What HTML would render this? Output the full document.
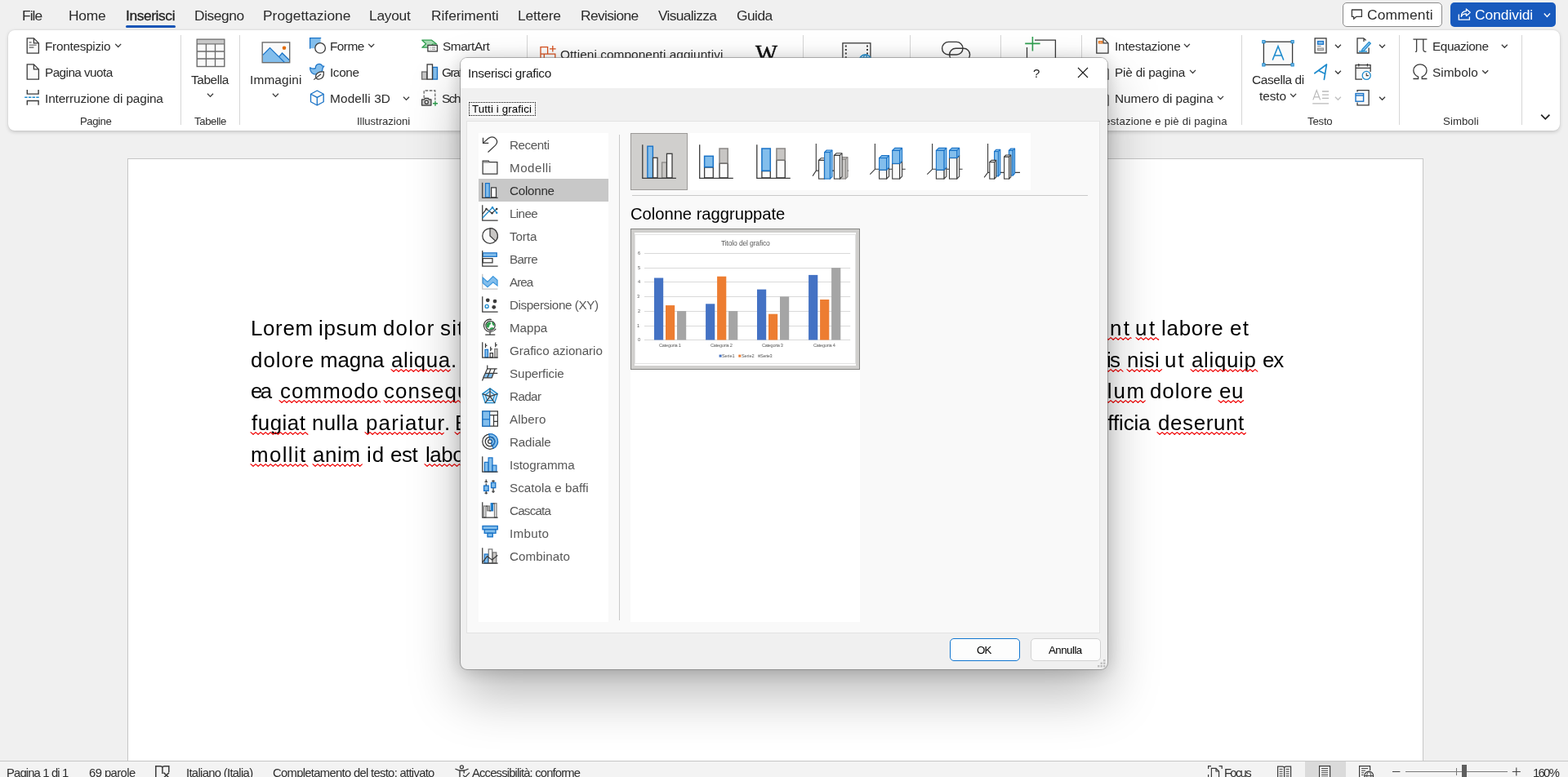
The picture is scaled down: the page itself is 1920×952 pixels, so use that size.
<!DOCTYPE html>
<html lang="it"><head><meta charset="utf-8"><title>Inserisci grafico</title>
<style>
html,body{margin:0;padding:0}
body{width:1920px;height:952px;overflow:hidden;position:relative;background:#f0f0f0;font-family:"Liberation Sans",sans-serif}
div,svg,span.t{position:absolute}
span.t{white-space:pre}
svg{overflow:visible}
</style></head>
<body>
<div style="left:0;top:0;width:1920px;height:952px;will-change:transform">
<div style="left:156px;top:194px;width:1587px;height:760px;background:#fff;border:1px solid #c6c6c6;box-sizing:border-box"></div>
<span class="t" style="left:307px;top:388px;font-size:25.9px;line-height:28px;color:#000;letter-spacing:0.66px;">Lorem </span>
<span class="t" style="left:390px;top:388px;font-size:25.9px;line-height:28px;color:#000;letter-spacing:0.66px;">ipsum </span>
<span class="t" style="left:469px;top:388px;font-size:25.9px;line-height:28px;color:#000;letter-spacing:1.2px;">dolor </span>
<span class="t" style="left:539px;top:388px;font-size:25.9px;line-height:28px;color:#000;letter-spacing:1.2px;">sit </span>
<span class="t" style="left:649px;top:388px;font-size:25.9px;line-height:28px;color:#000;letter-spacing:-0.95px;">amet, consectetur adipiscing elit, sed do eiusmod tempor </span>
<span class="t" style="left:1252px;top:388px;font-size:25.9px;line-height:28px;color:#000;letter-spacing:2.4px;">incididunt </span>
<span class="t" style="left:1390px;top:388px;font-size:25.9px;line-height:28px;color:#000;letter-spacing:2.6px;">ut </span>
<span class="t" style="left:1422px;top:388px;font-size:25.9px;line-height:28px;color:#000;letter-spacing:0.76px;">labore </span>
<span class="t" style="left:1506px;top:388px;font-size:25.9px;line-height:28px;color:#000;letter-spacing:1.4px;">et </span>
<span class="t" style="left:307px;top:427px;font-size:25.9px;line-height:28px;color:#000;letter-spacing:1.02px;">dolore </span>
<span class="t" style="left:392px;top:427px;font-size:25.9px;line-height:28px;color:#000;letter-spacing:-0.16px;">magna </span>
<span class="t" style="left:479px;top:427px;font-size:25.9px;line-height:28px;color:#000;letter-spacing:0.63px;">aliqua. </span>
<span class="t" style="left:648px;top:427px;font-size:25.9px;line-height:28px;color:#000;letter-spacing:-1.42px;">Ut enim ad minim veniam, quis nostrud exercitation ullamco </span>
<span class="t" style="left:1306px;top:427px;font-size:25.9px;line-height:28px;color:#000;letter-spacing:-1.7px;">laboris </span>
<span class="t" style="left:1380px;top:427px;font-size:25.9px;line-height:28px;color:#000;letter-spacing:0.3px;">nisi </span>
<span class="t" style="left:1426px;top:427px;font-size:25.9px;line-height:28px;color:#000;letter-spacing:2px;">ut </span>
<span class="t" style="left:1459px;top:427px;font-size:25.9px;line-height:28px;color:#000;letter-spacing:0.67px;">aliquip </span>
<span class="t" style="left:1546px;top:427px;font-size:25.9px;line-height:28px;color:#000;letter-spacing:-1.2px;">ex </span>
<span class="t" style="left:307px;top:465px;font-size:25.9px;line-height:28px;color:#000;letter-spacing:-2.6px;">ea </span>
<span class="t" style="left:343px;top:465px;font-size:25.9px;line-height:28px;color:#000;letter-spacing:1.09px;">commodo </span>
<span class="t" style="left:470px;top:465px;font-size:25.9px;line-height:28px;color:#000;letter-spacing:1.09px;">consequat. </span>
<span class="t" style="left:648px;top:465px;font-size:25.9px;line-height:28px;color:#000;letter-spacing:-1.2px;">Duis aute irure dolor in reprehenderit in voluptate velit esse </span>
<span class="t" style="left:1326px;top:465px;font-size:25.9px;line-height:28px;color:#000;letter-spacing:1.8px;">cillum </span>
<span class="t" style="left:1408px;top:465px;font-size:25.9px;line-height:28px;color:#000;letter-spacing:0.92px;">dolore </span>
<span class="t" style="left:1493px;top:465px;font-size:25.9px;line-height:28px;color:#000;letter-spacing:0.5px;">eu </span>
<span class="t" style="left:308px;top:504px;font-size:25.9px;line-height:28px;color:#000;letter-spacing:0.52px;">fugiat </span>
<span class="t" style="left:382px;top:504px;font-size:25.9px;line-height:28px;color:#000;letter-spacing:0.4px;">nulla </span>
<span class="t" style="left:448px;top:504px;font-size:25.9px;line-height:28px;color:#000;letter-spacing:1.19px;">pariatur. </span>
<span class="t" style="left:557px;top:504px;font-size:25.9px;line-height:28px;color:#000;letter-spacing:1.19px;">Excepteur </span>
<span class="t" style="left:649px;top:504px;font-size:25.9px;line-height:28px;color:#000;letter-spacing:-0.24px;">sint occaecat cupidatat non proident, sunt in culpa qui </span>
<span class="t" style="left:1342px;top:504px;font-size:25.9px;line-height:28px;color:#000;letter-spacing:-0.1px;">officia </span>
<span class="t" style="left:1418px;top:504px;font-size:25.9px;line-height:28px;color:#000;letter-spacing:0.64px;">deserunt </span>
<span class="t" style="left:307px;top:543px;font-size:25.9px;line-height:28px;color:#000;letter-spacing:1.38px;">mollit </span>
<span class="t" style="left:383px;top:543px;font-size:25.9px;line-height:28px;color:#000;letter-spacing:0.61px;">anim </span>
<span class="t" style="left:449px;top:543px;font-size:25.9px;line-height:28px;color:#000;letter-spacing:0.9px;">id </span>
<span class="t" style="left:478px;top:543px;font-size:25.9px;line-height:28px;color:#000;letter-spacing:-0.45px;">est </span>
<span class="t" style="left:521px;top:543px;font-size:25.9px;line-height:28px;color:#000;letter-spacing:-0.45px;">laborum. </span>
<svg style="left:479.3px;top:452.1px" width="72.4" height="4" viewBox="0 0 72.4 4"><path d="M0 0.6 L3.04 3.30 L6.07 0.60 L9.11 3.30 L12.14 0.60 L15.18 3.30 L18.21 0.60 L21.25 3.30 L24.28 0.60 L27.32 3.30 L30.35 0.60 L33.39 3.30 L36.42 0.60 L39.45 3.30 L42.49 0.60 L45.52 3.30 L48.56 0.60 L51.59 3.30 L54.63 0.60 L57.66 3.30 L60.70 0.60 L63.73 3.30 L66.77 0.60 L69.80 3.30 L72.40 0.99" fill="none" stroke="#f00000" stroke-width="1.15" stroke-linejoin="round" stroke-linecap="round"/></svg>
<svg style="left:342.2px;top:490.1px" width="123.7" height="4" viewBox="0 0 123.7 4"><path d="M0 0.6 L3.04 3.30 L6.07 0.60 L9.11 3.30 L12.14 0.60 L15.18 3.30 L18.21 0.60 L21.25 3.30 L24.28 0.60 L27.32 3.30 L30.35 0.60 L33.39 3.30 L36.42 0.60 L39.45 3.30 L42.49 0.60 L45.52 3.30 L48.56 0.60 L51.59 3.30 L54.63 0.60 L57.66 3.30 L60.70 0.60 L63.73 3.30 L66.77 0.60 L69.80 3.30 L72.84 0.60 L75.87 3.30 L78.91 0.60 L81.94 3.30 L84.98 0.60 L88.01 3.30 L91.05 0.60 L94.08 3.30 L97.12 0.60 L100.15 3.30 L103.19 0.60 L106.22 3.30 L109.26 0.60 L112.29 3.30 L115.33 0.60 L118.36 3.30 L121.40 0.60 L123.70 2.65" fill="none" stroke="#f00000" stroke-width="1.15" stroke-linejoin="round" stroke-linecap="round"/></svg>
<svg style="left:470.2px;top:490.1px" width="95.8" height="4" viewBox="0 0 95.8 4"><path d="M0 0.6 L3.04 3.30 L6.07 0.60 L9.11 3.30 L12.14 0.60 L15.18 3.30 L18.21 0.60 L21.25 3.30 L24.28 0.60 L27.32 3.30 L30.35 0.60 L33.39 3.30 L36.42 0.60 L39.45 3.30 L42.49 0.60 L45.52 3.30 L48.56 0.60 L51.59 3.30 L54.63 0.60 L57.66 3.30 L60.70 0.60 L63.73 3.30 L66.77 0.60 L69.80 3.30 L72.84 0.60 L75.87 3.30 L78.91 0.60 L81.94 3.30 L84.98 0.60 L88.01 3.30 L91.05 0.60 L94.08 3.30 L95.80 1.77" fill="none" stroke="#f00000" stroke-width="1.15" stroke-linejoin="round" stroke-linecap="round"/></svg>
<svg style="left:307px;top:529.1px" width="70.0" height="4" viewBox="0 0 70.0 4"><path d="M0 0.6 L3.04 3.30 L6.07 0.60 L9.11 3.30 L12.14 0.60 L15.18 3.30 L18.21 0.60 L21.25 3.30 L24.28 0.60 L27.32 3.30 L30.35 0.60 L33.39 3.30 L36.42 0.60 L39.45 3.30 L42.49 0.60 L45.52 3.30 L48.56 0.60 L51.59 3.30 L54.63 0.60 L57.66 3.30 L60.70 0.60 L63.73 3.30 L66.77 0.60 L69.80 3.30 L70.00 3.13" fill="none" stroke="#f00000" stroke-width="1.15" stroke-linejoin="round" stroke-linecap="round"/></svg>
<svg style="left:447px;top:529.1px" width="96.3" height="4" viewBox="0 0 96.3 4"><path d="M0 0.6 L3.04 3.30 L6.07 0.60 L9.11 3.30 L12.14 0.60 L15.18 3.30 L18.21 0.60 L21.25 3.30 L24.28 0.60 L27.32 3.30 L30.35 0.60 L33.39 3.30 L36.42 0.60 L39.45 3.30 L42.49 0.60 L45.52 3.30 L48.56 0.60 L51.59 3.30 L54.63 0.60 L57.66 3.30 L60.70 0.60 L63.73 3.30 L66.77 0.60 L69.80 3.30 L72.84 0.60 L75.87 3.30 L78.91 0.60 L81.94 3.30 L84.98 0.60 L88.01 3.30 L91.05 0.60 L94.08 3.30 L96.30 1.33" fill="none" stroke="#f00000" stroke-width="1.15" stroke-linejoin="round" stroke-linecap="round"/></svg>
<svg style="left:557px;top:529.1px" width="9.0" height="4" viewBox="0 0 9.0 4"><path d="M0 0.6 L3.04 3.30 L6.07 0.60 L9.00 3.21" fill="none" stroke="#f00000" stroke-width="1.15" stroke-linejoin="round" stroke-linecap="round"/></svg>
<svg style="left:307px;top:568.1px" width="70.0" height="4" viewBox="0 0 70.0 4"><path d="M0 0.6 L3.04 3.30 L6.07 0.60 L9.11 3.30 L12.14 0.60 L15.18 3.30 L18.21 0.60 L21.25 3.30 L24.28 0.60 L27.32 3.30 L30.35 0.60 L33.39 3.30 L36.42 0.60 L39.45 3.30 L42.49 0.60 L45.52 3.30 L48.56 0.60 L51.59 3.30 L54.63 0.60 L57.66 3.30 L60.70 0.60 L63.73 3.30 L66.77 0.60 L69.80 3.30 L70.00 3.13" fill="none" stroke="#f00000" stroke-width="1.15" stroke-linejoin="round" stroke-linecap="round"/></svg>
<svg style="left:383px;top:568.1px" width="60.4" height="4" viewBox="0 0 60.4 4"><path d="M0 0.6 L3.04 3.30 L6.07 0.60 L9.11 3.30 L12.14 0.60 L15.18 3.30 L18.21 0.60 L21.25 3.30 L24.28 0.60 L27.32 3.30 L30.35 0.60 L33.39 3.30 L36.42 0.60 L39.45 3.30 L42.49 0.60 L45.52 3.30 L48.56 0.60 L51.59 3.30 L54.63 0.60 L57.66 3.30 L60.40 0.87" fill="none" stroke="#f00000" stroke-width="1.15" stroke-linejoin="round" stroke-linecap="round"/></svg>
<svg style="left:520px;top:568.1px" width="46.0" height="4" viewBox="0 0 46.0 4"><path d="M0 0.6 L3.04 3.30 L6.07 0.60 L9.11 3.30 L12.14 0.60 L15.18 3.30 L18.21 0.60 L21.25 3.30 L24.28 0.60 L27.32 3.30 L30.35 0.60 L33.39 3.30 L36.42 0.60 L39.45 3.30 L42.49 0.60 L45.52 3.30 L46.00 2.88" fill="none" stroke="#f00000" stroke-width="1.15" stroke-linejoin="round" stroke-linecap="round"/></svg>
<svg style="left:1354px;top:413.1px" width="31.2" height="4" viewBox="0 0 31.2 4"><path d="M0 0.6 L3.04 3.30 L6.07 0.60 L9.11 3.30 L12.14 0.60 L15.18 3.30 L18.21 0.60 L21.25 3.30 L24.28 0.60 L27.32 3.30 L30.35 0.60 L31.20 1.36" fill="none" stroke="#f00000" stroke-width="1.15" stroke-linejoin="round" stroke-linecap="round"/></svg>
<svg style="left:1391.1px;top:413.1px" width="27.8" height="4" viewBox="0 0 27.8 4"><path d="M0 0.6 L3.04 3.30 L6.07 0.60 L9.11 3.30 L12.14 0.60 L15.18 3.30 L18.21 0.60 L21.25 3.30 L24.28 0.60 L27.32 3.30 L27.80 2.87" fill="none" stroke="#f00000" stroke-width="1.15" stroke-linejoin="round" stroke-linecap="round"/></svg>
<svg style="left:1354px;top:452.1px" width="21.0" height="4" viewBox="0 0 21.0 4"><path d="M0 0.6 L3.04 3.30 L6.07 0.60 L9.11 3.30 L12.14 0.60 L15.18 3.30 L18.21 0.60 L21.00 3.08" fill="none" stroke="#f00000" stroke-width="1.15" stroke-linejoin="round" stroke-linecap="round"/></svg>
<svg style="left:1379.8px;top:452.1px" width="42.6" height="4" viewBox="0 0 42.6 4"><path d="M0 0.6 L3.04 3.30 L6.07 0.60 L9.11 3.30 L12.14 0.60 L15.18 3.30 L18.21 0.60 L21.25 3.30 L24.28 0.60 L27.32 3.30 L30.35 0.60 L33.39 3.30 L36.42 0.60 L39.45 3.30 L42.49 0.60 L42.60 0.70" fill="none" stroke="#f00000" stroke-width="1.15" stroke-linejoin="round" stroke-linecap="round"/></svg>
<svg style="left:1458px;top:452.1px" width="81.8" height="4" viewBox="0 0 81.8 4"><path d="M0 0.6 L3.04 3.30 L6.07 0.60 L9.11 3.30 L12.14 0.60 L15.18 3.30 L18.21 0.60 L21.25 3.30 L24.28 0.60 L27.32 3.30 L30.35 0.60 L33.39 3.30 L36.42 0.60 L39.45 3.30 L42.49 0.60 L45.52 3.30 L48.56 0.60 L51.59 3.30 L54.63 0.60 L57.66 3.30 L60.70 0.60 L63.73 3.30 L66.77 0.60 L69.80 3.30 L72.84 0.60 L75.87 3.30 L78.91 0.60 L81.80 3.17" fill="none" stroke="#f00000" stroke-width="1.15" stroke-linejoin="round" stroke-linecap="round"/></svg>
<svg style="left:1354px;top:490.1px" width="48.3" height="4" viewBox="0 0 48.3 4"><path d="M0 0.6 L3.04 3.30 L6.07 0.60 L9.11 3.30 L12.14 0.60 L15.18 3.30 L18.21 0.60 L21.25 3.30 L24.28 0.60 L27.32 3.30 L30.35 0.60 L33.39 3.30 L36.42 0.60 L39.45 3.30 L42.49 0.60 L45.52 3.30 L48.30 0.83" fill="none" stroke="#f00000" stroke-width="1.15" stroke-linejoin="round" stroke-linecap="round"/></svg>
<svg style="left:1492px;top:490.1px" width="30.7" height="4" viewBox="0 0 30.7 4"><path d="M0 0.6 L3.04 3.30 L6.07 0.60 L9.11 3.30 L12.14 0.60 L15.18 3.30 L18.21 0.60 L21.25 3.30 L24.28 0.60 L27.32 3.30 L30.35 0.60 L30.70 0.91" fill="none" stroke="#f00000" stroke-width="1.15" stroke-linejoin="round" stroke-linecap="round"/></svg>
<svg style="left:1417.2px;top:529.1px" width="108.3" height="4" viewBox="0 0 108.3 4"><path d="M0 0.6 L3.04 3.30 L6.07 0.60 L9.11 3.30 L12.14 0.60 L15.18 3.30 L18.21 0.60 L21.25 3.30 L24.28 0.60 L27.32 3.30 L30.35 0.60 L33.39 3.30 L36.42 0.60 L39.45 3.30 L42.49 0.60 L45.52 3.30 L48.56 0.60 L51.59 3.30 L54.63 0.60 L57.66 3.30 L60.70 0.60 L63.73 3.30 L66.77 0.60 L69.80 3.30 L72.84 0.60 L75.87 3.30 L78.91 0.60 L81.94 3.30 L84.98 0.60 L88.01 3.30 L91.05 0.60 L94.08 3.30 L97.12 0.60 L100.15 3.30 L103.19 0.60 L106.22 3.30 L108.30 1.45" fill="none" stroke="#f00000" stroke-width="1.15" stroke-linejoin="round" stroke-linecap="round"/></svg>
<div style="left:10px;top:37px;width:1900px;height:123px;background:#fff;border-radius:8px;box-shadow:0 1.5px 4px rgba(0,0,0,.17),0 0 1.5px rgba(0,0,0,.12)"></div>
<span class="t" style="left:27px;top:9px;font-size:17.4px;line-height:20px;color:#2b2b2b;letter-spacing:-0.94px;">File</span>
<span class="t" style="left:84px;top:9px;font-size:17.4px;line-height:20px;color:#2b2b2b;letter-spacing:-0.2px;">Home</span>
<span class="t" style="left:238px;top:9px;font-size:17.4px;line-height:20px;color:#2b2b2b;letter-spacing:-0.42px;">Disegno</span>
<span class="t" style="left:322px;top:9px;font-size:17.4px;line-height:20px;color:#2b2b2b;letter-spacing:0.01px;">Progettazione</span>
<span class="t" style="left:452px;top:9px;font-size:17.4px;line-height:20px;color:#2b2b2b;letter-spacing:-0.28px;">Layout</span>
<span class="t" style="left:528px;top:9px;font-size:17.4px;line-height:20px;color:#2b2b2b;letter-spacing:-0.04px;">Riferimenti</span>
<span class="t" style="left:634px;top:9px;font-size:17.4px;line-height:20px;color:#2b2b2b;letter-spacing:-0.21px;">Lettere</span>
<span class="t" style="left:711px;top:9px;font-size:17.4px;line-height:20px;color:#2b2b2b;letter-spacing:-0.66px;">Revisione</span>
<span class="t" style="left:806px;top:9px;font-size:17.4px;line-height:20px;color:#2b2b2b;letter-spacing:-0.68px;">Visualizza</span>
<span class="t" style="left:902px;top:9px;font-size:17.4px;line-height:20px;color:#2b2b2b;letter-spacing:-0.55px;">Guida</span>
<span class="t" style="left:154px;top:9px;font-size:17.4px;line-height:20px;color:#1f1f1f;letter-spacing:-0.41px;-webkit-text-stroke:0.3px #1f1f1f;">Inserisci</span>
<div style="left:154px;top:31px;width:61px;height:3px;background:#1654b6;border-radius:1.5px"></div>
<div style="left:1644px;top:3px;width:122px;height:30px;background:#fff;border:1px solid #8a8a8a;border-radius:5px;box-sizing:border-box"></div>
<span class="t" style="left:1674px;top:8px;font-size:17.4px;line-height:20px;color:#2b2b2b;letter-spacing:0.18px;">Commenti</span>
<div style="left:1776px;top:3px;width:129px;height:30px;background:#185abd;border-radius:5px"></div>
<span class="t" style="left:1806px;top:8px;font-size:17.4px;line-height:20px;color:#fff;letter-spacing:-0.04px;">Condividi</span>
<div style="left:221.0px;top:43px;width:1px;height:110px;background:#d6d6d6"></div>
<div style="left:293.0px;top:43px;width:1px;height:110px;background:#d6d6d6"></div>
<div style="left:645.0px;top:43px;width:1px;height:110px;background:#d6d6d6"></div>
<div style="left:983.0px;top:43px;width:1px;height:110px;background:#d6d6d6"></div>
<div style="left:1114.0px;top:43px;width:1px;height:110px;background:#d6d6d6"></div>
<div style="left:1225.0px;top:43px;width:1px;height:110px;background:#d6d6d6"></div>
<div style="left:1323.5px;top:43px;width:1px;height:110px;background:#d6d6d6"></div>
<div style="left:1520.0px;top:43px;width:1px;height:110px;background:#d6d6d6"></div>
<div style="left:1713.0px;top:43px;width:1px;height:110px;background:#d6d6d6"></div>
<div style="left:1863.0px;top:43px;width:1px;height:110px;background:#d6d6d6"></div>
<span class="t" style="left:55px;top:48px;font-size:15.4px;line-height:17px;color:#2b2b2b;letter-spacing:-0.3px;">Frontespizio</span>
<span class="t" style="left:55px;top:80px;font-size:15.4px;line-height:17px;color:#2b2b2b;letter-spacing:-0.6px;">Pagina vuota</span>
<span class="t" style="left:55px;top:112px;font-size:15.4px;line-height:17px;color:#2b2b2b;letter-spacing:-0.15px;">Interruzione di pagina</span>
<span class="t" style="left:404px;top:48px;font-size:15.4px;line-height:17px;color:#2b2b2b;letter-spacing:-0.55px;">Forme</span>
<span class="t" style="left:404px;top:80px;font-size:15.4px;line-height:17px;color:#2b2b2b;letter-spacing:-0.41px;">Icone</span>
<span class="t" style="left:404px;top:112px;font-size:15.4px;line-height:17px;color:#2b2b2b;letter-spacing:0.14px;">Modelli 3D</span>
<span class="t" style="left:542px;top:48px;font-size:15.4px;line-height:17px;color:#2b2b2b;letter-spacing:-0.43px;">SmartArt</span>
<span class="t" style="left:686px;top:58px;font-size:15.4px;line-height:17px;color:#2b2b2b;letter-spacing:0.06px;">Ottieni componenti aggiuntivi</span>
<span class="t" style="left:1365px;top:48px;font-size:15.4px;line-height:17px;color:#2b2b2b;letter-spacing:-0.21px;">Intestazione</span>
<span class="t" style="left:1365px;top:80px;font-size:15.4px;line-height:17px;color:#2b2b2b;letter-spacing:-0.22px;">Piè di pagina</span>
<span class="t" style="left:1365px;top:112px;font-size:15.4px;line-height:17px;color:#2b2b2b;letter-spacing:-0.07px;">Numero di pagina</span>
<span class="t" style="left:1754px;top:48px;font-size:15.4px;line-height:17px;color:#2b2b2b;letter-spacing:-0.47px;">Equazione</span>
<span class="t" style="left:1754px;top:80px;font-size:15.4px;line-height:17px;color:#2b2b2b;letter-spacing:0.02px;">Simbolo</span>
<span class="t" style="left:541px;top:80px;font-size:15.4px;line-height:17px;color:#2b2b2b;letter-spacing:-1.5px;">Grafico</span>
<span class="t" style="left:541px;top:112px;font-size:15.4px;line-height:17px;color:#2b2b2b;letter-spacing:-1.5px;">Schermata</span>
<span class="t" style="left:234px;top:89px;font-size:15.4px;line-height:17px;color:#2b2b2b;letter-spacing:-0.42px;">Tabella</span>
<span class="t" style="left:306px;top:89px;font-size:15.4px;line-height:17px;color:#2b2b2b;letter-spacing:0.14px;">Immagini</span>
<span class="t" style="left:1533px;top:89px;font-size:15.4px;line-height:17px;color:#2b2b2b;letter-spacing:-0.38px;">Casella di</span>
<span class="t" style="left:1542px;top:109px;font-size:15.4px;line-height:17px;color:#2b2b2b;letter-spacing:-0.09px;">testo</span>
<span class="t" style="left:98px;top:141px;font-size:13.2px;line-height:15px;color:#2e2e2e;letter-spacing:-0.46px;">Pagine</span>
<span class="t" style="left:238px;top:141px;font-size:13.2px;line-height:15px;color:#2e2e2e;letter-spacing:-0.39px;">Tabelle</span>
<span class="t" style="left:437px;top:141px;font-size:13.2px;line-height:15px;color:#2e2e2e;letter-spacing:-0.07px;">Illustrazioni</span>
<span class="t" style="left:1337px;top:141px;font-size:13.2px;line-height:15px;color:#2e2e2e;letter-spacing:0.19px;">Intestazione e piè di pagina</span>
<span class="t" style="left:1601px;top:141px;font-size:13.2px;line-height:15px;color:#2e2e2e;letter-spacing:-0.21px;">Testo</span>
<span class="t" style="left:1767px;top:141px;font-size:13.2px;line-height:15px;color:#2e2e2e;letter-spacing:0.08px;">Simboli</span>
<span class="t" style="left:925px;top:50px;font-size:28.6px;line-height:31px;color:#111;font-family:'Liberation Serif', serif;-webkit-text-stroke:0.5px #111;">W</span>
<svg style="left:0;top:0" width="1920" height="170" viewBox="0 0 1920 170"><path d="M33.2 46.9 H41.400000000000006 L47.400000000000006 52.9 V65.1 H33.2 Z" fill="#fafafa" stroke="#3b3b3b" stroke-width="1.3" stroke-linejoin="miter"/><path d="M41.400000000000006 46.9 V52.9 H47.400000000000006" fill="none" stroke="#3b3b3b" stroke-width="1.3"/><path d="M35.6 51.9 H38.6 M35.6 55.2 H44.6 M35.6 58.1 H41.4" stroke="#8a8a8a" stroke-width="1.6" fill="none"/><path d="M141.2 53.9 L144.7 57.5 L148.2 53.9" fill="none" stroke="#3b3b3b" stroke-width="1.3"/><path d="M33.2 78.9 H41.400000000000006 L47.400000000000006 84.9 V97.10000000000001 H33.2 Z" fill="#fafafa" stroke="#3b3b3b" stroke-width="1.3" stroke-linejoin="miter"/><path d="M41.400000000000006 78.9 V84.9 H47.400000000000006" fill="none" stroke="#3b3b3b" stroke-width="1.3"/><path d="M33.3 110 V115.1 H47.1 V110 M33.3 128.7 V123.5 H47.1 V128.7" fill="#fafafa" stroke="#3b3b3b" stroke-width="1.4"/><path d="M30.2 119.3 H48.8" stroke="#1e8bcd" stroke-width="1.4" stroke-dasharray="3.4 1.3" fill="none"/><rect x="241.2" y="48.2" width="33.6" height="33.3" fill="#fafafa" stroke="#6b6b6b" stroke-width="1.4"/><rect x="241.9" y="48.9" width="32.2" height="4.3" fill="#c8c8c8"/><path d="M241.2 53.8 H274.8 M241.2 63 H274.8 M241.2 72 H274.8 M252.4 53.8 V81.5 M263.5 53.8 V81.5" stroke="#6b6b6b" stroke-width="1.3" fill="none"/><path d="M254 114.7 L257.5 118.4 L261 114.7" fill="none" stroke="#3b3b3b" stroke-width="1.3"/><rect x="321.2" y="51.9" width="33.5" height="24.8" fill="#fafafa" stroke="#6b6b6b" stroke-width="1.4"/><path d="M321.9 67.4 L330.5 58.6 L341.6 69.6 L345.5 65 L354 73.4 V76 H321.9 Z" fill="#83beec"/><path d="M321.9 67.4 L330.5 58.6 L348.3 76.4 M341.6 69.6 L345.5 65 L354.1 73.5" fill="none" stroke="#1a73c7" stroke-width="1.3"/><circle cx="348" cy="58.7" r="2.3" fill="#e36c0a"/><path d="M333.9 114.7 L337.4 118.4 L340.9 114.7" fill="none" stroke="#3b3b3b" stroke-width="1.3"/><path d="M379.6 59.2 V46.6 H392.6 V59.2 Z" fill="#83beec"/><path d="M379.6 59.8 V46.6 H393.2" fill="none" stroke="#1a73c7" stroke-width="1.3"/><circle cx="392.1" cy="58.9" r="6.3" fill="#fafafa" stroke="#3b3b3b" stroke-width="1.3"/><path d="M451.2 53.9 L454.7 57.5 L458.2 53.9" fill="none" stroke="#3b3b3b" stroke-width="1.3"/><path d="M379.6 82.8 C381.5 84.2 384 84.4 386.4 83.6 C386 80.3 388.2 78.4 390.8 78.4 C393 78.4 394.2 79.6 394.8 81 L396.8 81.2 L395.2 83.2 C395.2 88 391.6 91.2 387 91.2 C382.2 91.2 379.4 87.6 379.6 82.8 Z" fill="#83beec" stroke="#1a73c7" stroke-width="1.2" stroke-linejoin="round"/><path d="M396.4 87.8 C391.5 87.6 387.2 89.4 386.6 93.2 C386.2 96 388.4 97.4 391 97 C395.2 96.4 396.8 92.4 396.4 87.8 Z" fill="#fafafa" stroke="#3b3b3b" stroke-width="1.2" stroke-linejoin="round"/><path d="M384.2 97.6 L393 90.8" fill="none" stroke="#3b3b3b" stroke-width="1.2"/><path d="M388.3 111 L396.2 115.2 V124.8 L388.3 129 L380.5 124.8 V115.2 Z" fill="#fafafa" stroke="#1a73c7" stroke-width="1.3" stroke-linejoin="round"/><path d="M380.5 115.2 L388.3 119.4 L396.2 115.2 M388.3 119.4 V129" fill="none" stroke="#1a73c7" stroke-width="1.3"/><path d="M494 118.8 L497.5 122.39999999999999 L501 118.8" fill="none" stroke="#3b3b3b" stroke-width="1.3"/><path d="M516.8 49.2 H528.6 L534.6 54 H530 L526 58.2 H516.8 L521.6 53.7 Z" fill="#a6d9b3" stroke="#2f9e4f" stroke-width="1.2" stroke-linejoin="round"/><rect x="523.9" y="55.4" width="11.5" height="7.5" fill="#fafafa" stroke="#3b3b3b" stroke-width="1.3"/><path d="M526.5 58 H527.5 M528.8 58 H533 M526.5 60.3 H527.5 M528.8 60.3 H533" stroke="#8a8a8a" stroke-width="1" fill="none"/><rect x="516.6" y="88" width="6" height="9.1" fill="#c8c8c8" stroke="#6b6b6b" stroke-width="1.3"/><rect x="529.7" y="82.4" width="5.8" height="14.7" fill="#83beec" stroke="#1a73c7" stroke-width="1.3"/><rect x="523.1" y="78.9" width="6.4" height="18.2" fill="#fafafa" stroke="#3b3b3b" stroke-width="1.3"/><path d="M519.2 120 V111 H532.8 V122.6" fill="none" stroke="#6b6b6b" stroke-width="1.3" stroke-dasharray="3.6 1.6"/><path d="M516.6 121.8 H519.4 L520.4 120.4 H524.4 L525.4 121.8 H527.9 V129.1 H516.6 Z" fill="#c8c8c8" stroke="#3b3b3b" stroke-width="1.3" stroke-linejoin="round"/><circle cx="522.3" cy="125.2" r="2" fill="#fafafa" stroke="#3b3b3b" stroke-width="1.2"/><path d="M530 126.8 H536 M533 123.8 V129.8" stroke="#2f9e4f" stroke-width="1.4" fill="none"/><path d="M662 57.6 H670.6 V66.2 H662 Z M662 66.2 V75 M670.6 66.2 H679.8 V75 M666.3 66.2 V75" fill="none" stroke="#d8501e" stroke-width="1.3"/><path d="M673 59.8 H680.6 M676.8 56 V63.6" fill="none" stroke="#d8501e" stroke-width="1.3"/><rect x="1031.9" y="52.8" width="34" height="24" fill="#fafafa" stroke="#3b3b3b" stroke-width="1.3"/><path d="M1035.8 55.4 V75 M1062 55.4 V75" stroke="#3b3b3b" stroke-width="2" stroke-dasharray="2 2.6" fill="none"/><circle cx="1059.5" cy="74.6" r="7.6" fill="#fafafa" stroke="#1e8bcd" stroke-width="1.4"/><path d="M1052 74.6 H1067 M1059.5 67 C1055.5 70.5 1055.5 78.5 1059.5 82 M1059.5 67 C1063.5 70.5 1063.5 78.5 1059.5 82 M1053.4 70.4 H1065.6" fill="none" stroke="#1e8bcd" stroke-width="1.2"/><rect x="1153.6" y="51.4" width="25.4" height="15.6" rx="7.8" fill="none" stroke="#3b3b3b" stroke-width="1.4"/><rect x="1162.6" y="59.2" width="25" height="15.6" rx="7.8" fill="none" stroke="#3b3b3b" stroke-width="1.4"/><path d="M1267 49.2 H1292.4 V72" fill="none" stroke="#3b3b3b" stroke-width="1.3"/><path d="M1257.5 58 V72" fill="none" stroke="#3b3b3b" stroke-width="1.3"/><path d="M1255.2 53.4 H1273.6 M1264.4 45 V62.6" fill="none" stroke="#2f9e4f" stroke-width="1.6"/><path d="M1342.8 46.9 H1351.0 L1357.0 52.9 V65.1 H1342.8 Z" fill="#fafafa" stroke="#3b3b3b" stroke-width="1.3" stroke-linejoin="miter"/><path d="M1351.0 46.9 V52.9 H1357.0" fill="none" stroke="#3b3b3b" stroke-width="1.3"/><rect x="1345.4" y="50.6" width="4.4" height="2.4" fill="#f4b183" stroke="#e36c0a" stroke-width="1"/><path d="M1342.8 78.9 H1351.0 L1357.0 84.9 V97.10000000000001 H1342.8 Z" fill="#fafafa" stroke="#3b3b3b" stroke-width="1.3" stroke-linejoin="miter"/><path d="M1351.0 78.9 V84.9 H1357.0" fill="none" stroke="#3b3b3b" stroke-width="1.3"/><path d="M1342.8 110.9 H1351.0 L1357.0 116.9 V129.1 H1342.8 Z" fill="#fafafa" stroke="#3b3b3b" stroke-width="1.3" stroke-linejoin="miter"/><path d="M1351.0 110.9 V116.9 H1357.0" fill="none" stroke="#3b3b3b" stroke-width="1.3"/><path d="M1449.9 53.9 L1453.4 57.5 L1456.9 53.9" fill="none" stroke="#3b3b3b" stroke-width="1.3"/><path d="M1457 85.9 L1460.5 89.5 L1464 85.9" fill="none" stroke="#3b3b3b" stroke-width="1.3"/><path d="M1491 117.9 L1494.5 121.5 L1498 117.9" fill="none" stroke="#3b3b3b" stroke-width="1.3"/><rect x="1547.4" y="51.2" width="35.2" height="28.2" fill="#fafafa" stroke="#3b3b3b" stroke-width="1.3"/><rect x="1545.8000000000002" y="49.6" width="3.2" height="3.2" fill="#83beec" stroke="#1e8bcd" stroke-width="1"/><rect x="1581.0" y="49.6" width="3.2" height="3.2" fill="#83beec" stroke="#1e8bcd" stroke-width="1"/><rect x="1545.8000000000002" y="77.80000000000001" width="3.2" height="3.2" fill="#83beec" stroke="#1e8bcd" stroke-width="1"/><rect x="1581.0" y="77.80000000000001" width="3.2" height="3.2" fill="#83beec" stroke="#1e8bcd" stroke-width="1"/><path d="M1558.2 73.6 L1565 56.6 L1571.8 73.6 M1560.4 68 H1569.6" fill="none" stroke="#1e8bcd" stroke-width="1.5"/><path d="M1580.1 114.9 L1583.6 118.5 L1587.1 114.9" fill="none" stroke="#3b3b3b" stroke-width="1.3"/><rect x="1610.1" y="46.9" width="13.9" height="18" fill="#fafafa" stroke="#3b3b3b" stroke-width="1.3"/><rect x="1613.6" y="50.5" width="6.8" height="3.8" fill="#83beec" stroke="#1a73c7" stroke-width="1.2"/><path d="M1613.2 56.5 H1617.6" stroke="#8a8a8a" stroke-width="1" fill="none"/><rect x="1613.6" y="59" width="6.8" height="2.6" fill="#c8c8c8" stroke="#8a8a8a" stroke-width="1"/><path d="M1634.9 54.7 L1638.4 58.300000000000004 L1641.9 54.7" fill="none" stroke="#3b3b3b" stroke-width="1.3"/><path d="M1634.9 86.7 L1638.4 90.3 L1641.9 86.7" fill="none" stroke="#3b3b3b" stroke-width="1.3"/><path d="M1634.9 118.7 L1638.4 122.3 L1641.9 118.7" fill="none" stroke="#c0c0c0" stroke-width="1.3"/><path d="M1609.8 89.8 L1624.4 79 L1621.4 97.4 M1614.6 86.4 L1622.8 90.4" fill="none" stroke="#1e8bcd" stroke-width="1.7" stroke-linejoin="round" stroke-linecap="round"/><path d="M1607.8 122.4 L1612.2 110.6 L1616.6 122.4 M1609.2 118.8 H1615.2" fill="none" stroke="#b9b9b9" stroke-width="1.2"/><path d="M1619 112 H1627 M1619 116.2 H1627 M1619 120.4 H1627 M1607.2 126.9 H1627" fill="none" stroke="#b9b9b9" stroke-width="1.3"/><path d="M1670 46.9 H1662 V65 H1676.1 V58.5 M1670 46.9 L1672.6 49.5 M1670 46.9 V51" fill="none" stroke="#3b3b3b" stroke-width="1.3"/><path d="M1668 60.4 L1676.4 51.4 L1678.4 53.2 L1670.2 62.2 L1667.2 63 Z" fill="#83beec" stroke="#1e8bcd" stroke-width="1.2" stroke-linejoin="round"/><path d="M1664 63 H1674" stroke="#1e8bcd" stroke-width="1.4" fill="none"/><path d="M1689 54.7 L1692.5 58.300000000000004 L1696 54.7" fill="none" stroke="#3b3b3b" stroke-width="1.3"/><path d="M1689 118.7 L1692.5 122.3 L1696 118.7" fill="none" stroke="#3b3b3b" stroke-width="1.3"/><path d="M1668 97.1 H1660 V79.6 H1678.1 V88" fill="#fafafa" stroke="#3b3b3b" stroke-width="1.3"/><path d="M1660 83.4 H1678 M1663.8 78 V81.4 M1674.4 78 V81.4" fill="none" stroke="#3b3b3b" stroke-width="1.3"/><circle cx="1673.2" cy="92.4" r="5" fill="#fafafa" stroke="#1e8bcd" stroke-width="1.3"/><path d="M1673.2 89.4 V92.6 H1675.8" fill="none" stroke="#3b3b3b" stroke-width="1.1"/><path d="M1662 112.6 V110.7 H1676.1 V128.9 H1662 V125.6" fill="#fafafa" stroke="#3b3b3b" stroke-width="1.3"/><rect x="1660" y="114.6" width="9.6" height="9.6" fill="#fafafa" stroke="#1a73c7" stroke-width="1.4"/><path d="M1660 117 H1669.6" stroke="#1a73c7" stroke-width="1.4" fill="none"/><path d="M1730.4 48.2 H1747.4 M1734.6 48.2 V62.2 C1734.6 63 1734 63.4 1733 63.4 M1742.8 48.2 V60.6 C1742.8 62.6 1744 63.6 1746.4 63.2" fill="none" stroke="#3b3b3b" stroke-width="1.3"/><path d="M1838.8 54.7 L1842.3 58.300000000000004 L1845.8 54.7" fill="none" stroke="#3b3b3b" stroke-width="1.3"/><path d="M1730.4 96.5 H1736.6 V94.2 C1732.8 92.2 1730.8 89.4 1730.8 86.2 C1730.8 81.8 1734.4 78.9 1738.9 78.9 C1743.4 78.9 1747 81.8 1747 86.2 C1747 89.4 1745 92.2 1741.2 94.2 V96.5 H1747.4" fill="none" stroke="#3b3b3b" stroke-width="1.3"/><path d="M1815.2 86.2 L1818.7 89.8 L1822.2 86.2" fill="none" stroke="#3b3b3b" stroke-width="1.3"/><path d="M1887.2 140.6 L1892.3 145.79999999999998 L1897.4 140.6" fill="none" stroke="#222" stroke-width="1.8"/><path d="M1655.4 12 H1667.4 V20.4 H1660.6 L1657.6 23.2 V20.4 H1655.4 Z" fill="none" stroke="#3b3b3b" stroke-width="1.3" stroke-linejoin="round"/><path d="M1786.3 17.6 V24.2 H1799.4 V20.6" fill="none" stroke="#fff" stroke-width="1.3"/><path d="M1795.4 11 L1800.2 15.2 L1795.4 19.4 V16.8 C1792.6 16.6 1790.6 17.6 1789.2 20.4 C1789.2 16.4 1791.4 13.8 1795.4 13.6 Z" fill="none" stroke="#fff" stroke-width="1.3" stroke-linejoin="round"/><path d="M1890.8 16.6 L1894.3999999999999 20.400000000000002 L1898.0 16.6" fill="none" stroke="#fff" stroke-width="1.4"/></svg>
<div style="left:0px;top:932px;width:1920px;height:20px;background:#f3f3f3;border-top:1px solid #c6c6c6;box-sizing:border-box"></div>
<span class="t" style="left:8px;top:939px;font-size:14.8px;line-height:16px;color:#2e2e2e;letter-spacing:-0.85px;">Pagina 1 di 1</span>
<span class="t" style="left:109px;top:939px;font-size:14.8px;line-height:16px;color:#2e2e2e;letter-spacing:-0.56px;">69 parole</span>
<span class="t" style="left:228px;top:939px;font-size:14.8px;line-height:16px;color:#2e2e2e;letter-spacing:-0.68px;">Italiano (Italia)</span>
<span class="t" style="left:334px;top:939px;font-size:14.8px;line-height:16px;color:#2e2e2e;letter-spacing:-0.69px;">Completamento del testo: attivato</span>
<span class="t" style="left:578px;top:939px;font-size:14.8px;line-height:16px;color:#2e2e2e;letter-spacing:-0.83px;">Accessibilità: conforme</span>
<span class="t" style="left:1499px;top:939px;font-size:14.8px;line-height:16px;color:#2e2e2e;letter-spacing:-1.69px;">Focus</span>
<span class="t" style="left:1877px;top:939px;font-size:14.8px;line-height:16px;color:#2e2e2e;letter-spacing:-1.67px;">160%</span>
<div style="left:1598px;top:933px;width:50px;height:19px;background:#dadada"></div>
<svg style="left:0;top:0;overflow:hidden" width="1920" height="952" viewBox="0 0 1920 952"><path d="M1721 945.5 H1846" stroke="#7a7a7a" stroke-width="1" fill="none"/><path d="M1783.5 941 V950" stroke="#7a7a7a" stroke-width="1" fill="none"/><rect x="1790" y="937" width="6" height="15" fill="#5e5e5e"/><path d="M1705 945.5 H1714.4 M1851.8 945.5 H1861.8 M1856.8 940.5 V950.5" stroke="#444" stroke-width="1.1" fill="none"/><path d="M190.8 953 V938.8 H196.4 C197.6 938.8 198.6 939.4 198.9 940.4 C199.2 939.4 200.2 938.8 201.4 938.8 H206.8 V946 M198.9 940.4 V948" fill="none" stroke="#3b3b3b" stroke-width="1.5"/><path d="M200.4 946.6 L207 953 M207 946.6 L200.4 953" fill="none" stroke="#3b3b3b" stroke-width="1.5"/><circle cx="565.4" cy="939.8" r="2" fill="none" stroke="#3b3b3b" stroke-width="1.3"/><path d="M557.4 942 C560 943.6 562.6 944.2 565.6 944.2 C568.6 944.2 571 943.6 573.6 942 M563 944.2 V953 M568.2 944.2 V947.6" fill="none" stroke="#3b3b3b" stroke-width="1.4"/><path d="M567 949.6 L569.6 952.2 L575 946.6" fill="none" stroke="#3b3b3b" stroke-width="1.3"/><path d="M1479.6 942 V938.6 H1483 M1492.6 938.6 H1496.2 V942 M1479.6 949 V952" fill="none" stroke="#3b3b3b" stroke-width="1.2"/><path d="M1483.4 952 V941.4 H1489 L1492.6 945 V952 M1489 941.4 V945 H1492.6" fill="none" stroke="#3b3b3b" stroke-width="1.2"/><path d="M1564.6 952 V939.2 H1570.4 C1571.6 939.2 1572.4 939.8 1572.6 940.8 C1572.8 939.8 1573.6 939.2 1574.8 939.2 H1580.6 V952 M1572.6 940.8 V952" fill="none" stroke="#3b3b3b" stroke-width="1.2"/><path d="M1566.6 942.4 H1570.6 M1566.6 945.2 H1570.6 M1566.6 948 H1570.6 M1566.6 950.8 H1570.6 M1574.6 942.4 H1578.6 M1574.6 945.2 H1578.6 M1574.6 948 H1578.6 M1574.6 950.8 H1578.6" fill="none" stroke="#3b3b3b" stroke-width="1"/><path d="M1615.6 952 V938.6 H1628.6 V952" fill="#fafafa" stroke="#3b3b3b" stroke-width="1.2"/><path d="M1618 941.6 H1626.2 M1618 944.2 H1626.2 M1618 946.8 H1626.2 M1618 949.4 H1626.2 M1618 952 H1626.2" fill="none" stroke="#3b3b3b" stroke-width="1"/><path d="M1664.6 952 V938.6 H1677.6 V944" fill="#fafafa" stroke="#3b3b3b" stroke-width="1.2"/><path d="M1667 941.6 H1675.2 M1667 944.2 H1672 M1667 946.8 H1670.4 M1667 949.4 H1669.6" fill="none" stroke="#3b3b3b" stroke-width="1"/><circle cx="1676.2" cy="950.6" r="5.4" fill="#f3f3f3" stroke="#3b3b3b" stroke-width="1.2"/><path d="M1670.8 950.6 H1681.6 M1676.2 945.2 C1673.4 947.4 1673.4 951 1674 953 M1676.2 945.2 C1679 947.4 1679 951 1678.4 953" fill="none" stroke="#3b3b3b" stroke-width="1"/></svg>
<div style="left:564px;top:71px;width:792px;height:749px;border-radius:8px;background:#f0f0f0;box-shadow:0 0 0 1px rgba(110,110,110,.5),0 32px 64px rgba(0,0,0,.27),0 2px 21px rgba(0,0,0,.20);overflow:hidden"><div style="left:0;top:0;width:792px;height:37px;background:#fff"></div></div>
<span class="t" style="left:573px;top:81px;font-size:15.4px;line-height:17px;color:#1b1b1b;letter-spacing:-0.29px;">Inserisci grafico</span>
<span class="t" style="left:1265px;top:81px;font-size:15px;line-height:17px;color:#1b1b1b;">?</span>
<svg style="left:1319px;top:82px" width="14" height="14" viewBox="0 0 14 14"><path d="M1 1 L13 13 M13 1 L1 13" stroke="#1b1b1b" stroke-width="1.1" fill="none"/></svg>
<div style="left:572px;top:123px;width:86px;height:22px;background:#f8f8f8;box-shadow:0 0 0 0.5px #e9e9e9"></div>
<div style="left:574px;top:125px;width:82px;height:17px;border:1px dotted #000;box-sizing:border-box"></div>
<span class="t" style="left:578px;top:126px;font-size:13.3px;line-height:15px;color:#000;letter-spacing:0.12px;">Tutti i grafici</span>
<div style="left:571px;top:148px;width:776px;height:628px;background:#f9f9f9;border:1px solid #e3e3e3;box-sizing:border-box"></div>
<div style="left:586px;top:163px;width:159px;height:599px;background:#fff"></div>
<div style="left:586px;top:219px;width:159px;height:28px;background:#c8c8c8"></div>
<span class="t" style="left:624px;top:169px;font-size:15.2px;line-height:17px;color:#575757;letter-spacing:-0.41px;">Recenti</span>
<span class="t" style="left:624px;top:197px;font-size:15.2px;line-height:17px;color:#575757;letter-spacing:0.48px;">Modelli</span>
<span class="t" style="left:624px;top:225px;font-size:15.2px;line-height:17px;color:#2f2f2f;letter-spacing:-0.26px;">Colonne</span>
<span class="t" style="left:624px;top:253px;font-size:15.2px;line-height:17px;color:#575757;letter-spacing:-0.62px;">Linee</span>
<span class="t" style="left:624px;top:281px;font-size:15.2px;line-height:17px;color:#575757;letter-spacing:-0.1px;">Torta</span>
<span class="t" style="left:624px;top:309px;font-size:15.2px;line-height:17px;color:#575757;letter-spacing:-0.62px;">Barre</span>
<span class="t" style="left:624px;top:337px;font-size:15.2px;line-height:17px;color:#575757;letter-spacing:-0.94px;">Area</span>
<span class="t" style="left:624px;top:365px;font-size:15.2px;line-height:17px;color:#575757;letter-spacing:-0.38px;">Dispersione (XY)</span>
<span class="t" style="left:624px;top:393px;font-size:15.2px;line-height:17px;color:#575757;letter-spacing:-0.04px;">Mappa</span>
<span class="t" style="left:624px;top:421px;font-size:15.2px;line-height:17px;color:#575757;letter-spacing:-0.06px;">Grafico azionario</span>
<span class="t" style="left:624px;top:449px;font-size:15.2px;line-height:17px;color:#575757;letter-spacing:-0.09px;">Superficie</span>
<span class="t" style="left:624px;top:477px;font-size:15.2px;line-height:17px;color:#575757;letter-spacing:-0.59px;">Radar</span>
<span class="t" style="left:624px;top:505px;font-size:15.2px;line-height:17px;color:#575757;letter-spacing:0.1px;">Albero</span>
<span class="t" style="left:624px;top:533px;font-size:15.2px;line-height:17px;color:#575757;letter-spacing:-0.15px;">Radiale</span>
<span class="t" style="left:624px;top:561px;font-size:15.2px;line-height:17px;color:#575757;letter-spacing:-0.06px;">Istogramma</span>
<span class="t" style="left:624px;top:589px;font-size:15.2px;line-height:17px;color:#575757;letter-spacing:0.05px;">Scatola e baffi</span>
<span class="t" style="left:624px;top:617px;font-size:15.2px;line-height:17px;color:#575757;letter-spacing:-0.79px;">Cascata</span>
<span class="t" style="left:624px;top:645px;font-size:15.2px;line-height:17px;color:#575757;letter-spacing:0.3px;">Imbuto</span>
<span class="t" style="left:624px;top:673px;font-size:15.2px;line-height:17px;color:#575757;letter-spacing:0.06px;">Combinato</span>
<div style="left:758px;top:165px;width:1px;height:595px;background:#c9c9c9"></div>
<div style="left:772px;top:163px;width:490px;height:70px;background:#fff"></div>
<div style="left:772px;top:163px;width:70px;height:70px;background:#d0cfcd;border:1px solid #9c9a98;box-sizing:border-box"></div>
<div style="left:774px;top:239px;width:558px;height:1px;background:#c9c9c9"></div>
<span class="t" style="left:772px;top:251px;font-size:20.2px;line-height:22px;color:#000;letter-spacing:-0.02px;">Colonne raggruppate</span>
<div style="left:772px;top:280px;width:281px;height:482px;background:#fff"></div>
<div style="left:772px;top:280px;width:281px;height:173px;background:#d0cfcd;border:1px solid #868684;box-sizing:border-box"></div>
<div style="left:777px;top:285px;width:271px;height:163px;background:#fff"></div>
<div style="left:777px;top:287px;width:271px;height:159px;border:1px solid #e3e3e3;box-sizing:border-box"></div>
<div style="left:1163px;top:782px;width:86px;height:28px;background:#fdfdfd;border:1.5px solid #1176d0;border-radius:5px;box-sizing:border-box"></div>
<div style="left:1262px;top:782px;width:86px;height:28px;background:#fdfdfd;border:1px solid #d2d2d2;border-radius:5px;box-sizing:border-box"></div>
<span class="t" style="left:1196px;top:789px;font-size:13.3px;line-height:15px;color:#000;letter-spacing:-0.8px;">OK</span>
<span class="t" style="left:1284px;top:789px;font-size:13.3px;line-height:15px;color:#000;letter-spacing:-0.52px;">Annulla</span>
<svg style="left:0;top:0" width="1920" height="952" viewBox="0 0 1920 952"><rect x="1351" y="808" width="2.4" height="2.4" fill="#bdbdbd"/><rect x="1347.5" y="811.5" width="2.4" height="2.4" fill="#bdbdbd"/><rect x="1351" y="811.5" width="2.4" height="2.4" fill="#bdbdbd"/><rect x="1344" y="815" width="2.4" height="2.4" fill="#bdbdbd"/><rect x="1347.5" y="815" width="2.4" height="2.4" fill="#bdbdbd"/><rect x="1351" y="815" width="2.4" height="2.4" fill="#bdbdbd"/></svg>
<svg style="left:590px;top:167px" width="20" height="20" viewBox="0 0 16 16"><path d="M1.2 1.4 V6.6 H6.6" fill="none" stroke="#3b3b3b" stroke-width="1"/><path d="M1.3 6.5 L6.4 2 C8.6 0.1 11.8 0.2 13.6 2.3 C15.3 4.3 15.1 7 13.2 8.9 L6 15.6" fill="none" stroke="#3b3b3b" stroke-width="1"/></svg><svg style="left:590px;top:195px" width="20" height="20" viewBox="0 0 16 16"><path d="M0.9 14.5 V1.7 H6.6 L7.4 2.9 H15.1 V14.5 Z" fill="#fafafa" stroke="#3b3b3b" stroke-width="1"/><path d="M1 3.1 H6.4 L7.4 2.9" fill="none" stroke="#797979" stroke-width="1"/></svg><svg style="left:590px;top:223px" width="20" height="20" viewBox="0 0 16 16"><rect x="3.6" y="1.3" width="3.8" height="13.8" fill="#83beec" stroke="#1a73c7" stroke-width="1"/><rect x="9.3" y="5.5" width="4.7" height="9.6" fill="#fff" stroke="#3b3b3b" stroke-width="1"/><path d="M0.6 0.5 V15.5 H15.7" fill="none" stroke="#3b3b3b" stroke-width="1"/></svg><svg style="left:590px;top:251px" width="20" height="20" viewBox="0 0 16 16"><path d="M0.6 0.2 V15.3 H15.7" fill="none" stroke="#3b3b3b" stroke-width="1"/><path d="M0.8 8.8 L4.4 4 L10 8.2 L14.6 4" fill="none" stroke="#3b3b3b" stroke-width="1"/><path d="M0.6 13 L10.4 2.6 L14.6 7.8" fill="none" stroke="#1e8bcd" stroke-width="1"/><circle cx="4.4" cy="4" r="1" fill="#3b3b3b"/><circle cx="10" cy="8.2" r="1" fill="#3b3b3b"/><circle cx="14.6" cy="4" r="1" fill="#3b3b3b"/><circle cx="10.4" cy="2.6" r="1" fill="#1e8bcd"/><circle cx="14.6" cy="7.8" r="1" fill="#1e8bcd"/></svg><svg style="left:590px;top:279px" width="20" height="20" viewBox="0 0 16 16"><circle cx="8" cy="8" r="7.4" fill="#fafafa" stroke="#3b3b3b" stroke-width="1"/><path d="M8 0.6 A7.4 7.4 0 0 1 13.4 13.1 L8 8 Z" fill="#c8c6c4" stroke="#3b3b3b" stroke-width="1" stroke-linejoin="round"/></svg><svg style="left:590px;top:307px" width="20" height="20" viewBox="0 0 16 16"><rect x="1" y="2.3" width="13.6" height="3.6" fill="#83beec" stroke="#1a73c7" stroke-width="1"/><rect x="1" y="7.7" width="9.4" height="4.2" fill="#fff" stroke="#3b3b3b" stroke-width="1"/><path d="M0.6 0 V15.3 H15.7" fill="none" stroke="#3b3b3b" stroke-width="1"/></svg><svg style="left:590px;top:335px" width="20" height="20" viewBox="0 0 16 16"><path d="M0.6 0.5 V15.3 H15.5" fill="none" stroke="#c6c6c6" stroke-width="1.1"/><path d="M1 4.2 L5.6 8.4 L11 2.8 L15.2 6.6 V12 L11 8.6 L5.6 13.4 L1 9.4 Z" fill="#83beec" stroke="#3d97dd" stroke-width="1" stroke-linejoin="miter"/></svg><svg style="left:590px;top:363px" width="20" height="20" viewBox="0 0 16 16"><path d="M0.6 0.2 V15.3 H15.7" fill="none" stroke="#3b3b3b" stroke-width="1"/><circle cx="5.8" cy="3.8" r="1.9" fill="#3b3b3b"/><circle cx="12.8" cy="4.8" r="1.9" fill="#3b3b3b"/><circle cx="11.8" cy="10.6" r="1.9" fill="#3b3b3b"/><circle cx="4.9" cy="9.9" r="1.6" fill="#fff" stroke="#1e8bcd" stroke-width="1.1"/></svg><svg style="left:590px;top:391px" width="20" height="20" viewBox="0 0 16 16"><circle cx="8.4" cy="6.4" r="4.5" fill="#f4faf5" stroke="#3b3b3b" stroke-width="1"/><path d="M4.6 5.2 C5.4 3.4 7.4 2.6 8.6 3 C9.2 4.4 8.4 5.6 7.4 6 C7.6 7.4 6.6 8.4 5.6 8.6 C4.6 7.8 4.2 6.4 4.6 5.2 Z M10.2 2.6 C11.8 3.4 12.6 5 12.4 6.6 C11.2 6.6 10.4 5.8 10.4 4.8 C9.6 4.2 9.6 3.2 10.2 2.6 Z M7.4 9.8 C8.2 8.2 10.4 7.8 11.6 8.6 C10.8 10.2 8.8 10.8 7.4 9.8 Z" fill="#2e9f4e"/><path d="M9.6 0.4 C5 -0.6 1.6 2.6 2 7 C2.4 10.8 6 13 9.8 12.2 C11.6 11.8 13 10.8 13.8 9.4" fill="none" stroke="#3b3b3b" stroke-width="1"/><path d="M8 12.4 V15.2 M3.4 15.3 H13" fill="none" stroke="#3b3b3b" stroke-width="1"/></svg><svg style="left:590px;top:419px" width="20" height="20" viewBox="0 0 16 16"><rect x="3.2" y="7.4" width="2.8" height="7.8" fill="#83beec" stroke="#1a73c7" stroke-width="1"/><rect x="8.1" y="10.9" width="2.6" height="4.3" fill="#fff" stroke="#3b3b3b" stroke-width="1"/><rect x="12.6" y="6.8" width="2.6" height="8.4" fill="#c8c6c4" stroke="#797979" stroke-width="1"/><path d="M3.6 1.4 V5.6 M3.6 3.4 H5.2 M8.6 4.6 V9 M8.6 6.8 H10.2 M13.4 0.4 V5 M13.4 2.8 H15" fill="none" stroke="#3b3b3b" stroke-width="1"/><path d="M0.6 0.2 V15.3 H15.7" fill="none" stroke="#3b3b3b" stroke-width="1"/></svg><svg style="left:590px;top:447px" width="20" height="20" viewBox="0 0 16 16"><path d="M3.6 8.2 L1.6 12.6 H9.6 L11.2 8.2 Z" fill="#83beec"/><path d="M5.4 0.4 V3.8 M5.4 3.8 H15 M5.4 3.8 L1.4 12.6 H9.8 L12.8 4.2 M8.8 3.8 L5.4 12.6 M3.4 8.2 H15.4 M12.8 4.2 L15 3.8 M0.4 15.6 L1.6 12.6" fill="none" stroke="#3b3b3b" stroke-width="1" stroke-linejoin="round"/></svg><svg style="left:590px;top:475px" width="20" height="20" viewBox="0 0 16 16"><path d="M8 0.7 L15.4 6.1 L12.6 14.9 H3.4 L0.6 6.1 Z" fill="#d6e9f8" stroke="#1e8bcd" stroke-width="1.1"/><path d="M8 3.6 L12.6 7 L10.8 12.4 H5.2 L3.4 7 Z" fill="none" stroke="#1e8bcd" stroke-width="1"/><path d="M8 0.7 V8.5 L15.4 6.1 M8 8.5 L12.8 15.2 M8 8.5 L3.2 15.2 M8 8.5 L0.6 6.1" fill="none" stroke="#3b3b3b" stroke-width="1"/></svg><svg style="left:590px;top:503px" width="20" height="20" viewBox="0 0 16 16"><rect x="0.7" y="0.7" width="14.8" height="14.6" fill="#fff" stroke="#3b3b3b" stroke-width="1"/><path d="M8 4.5 H15.4 M11.6 4.5 V15.2 M11.6 10.6 H15.4" fill="none" stroke="#3b3b3b" stroke-width="1"/><rect x="0.7" y="0.7" width="7" height="14.6" fill="#83beec" stroke="#1a73c7" stroke-width="1"/><path d="M0.7 8.6 H7.7" fill="none" stroke="#1a73c7" stroke-width="1"/></svg><svg style="left:590px;top:531px" width="20" height="20" viewBox="0 0 16 16"><circle cx="8" cy="8" r="7.4" fill="#fafafa" stroke="#3b3b3b" stroke-width="1"/><path d="M7 0.6 A7.4 7.4 0 0 1 11.4 14.6 L8 8 Z" fill="#83beec" stroke="#1a73c7" stroke-width="1"/><circle cx="8" cy="8" r="4.6" fill="none" stroke="#3b3b3b" stroke-width="1"/><path d="M7.4 3.4 A4.6 4.6 0 0 1 10.2 12" fill="none" stroke="#1a73c7" stroke-width="1"/><circle cx="8" cy="8" r="1.9" fill="#fff" stroke="#3b3b3b" stroke-width="1"/><path d="M7.6 6.1 A1.9 1.9 0 0 1 8.9 9.7" fill="none" stroke="#1a73c7" stroke-width="1"/></svg><svg style="left:590px;top:559px" width="20" height="20" viewBox="0 0 16 16"><rect x="2.7" y="5.9" width="3.8" height="9.3" fill="#83beec" stroke="#1a73c7" stroke-width="1"/><rect x="6.5" y="1.5" width="3.9" height="13.7" fill="#83beec" stroke="#1a73c7" stroke-width="1"/><rect x="10.4" y="8.9" width="3.9" height="6.3" fill="#83beec" stroke="#1a73c7" stroke-width="1"/><path d="M0.6 0.2 V15.3 H15.7" fill="none" stroke="#3b3b3b" stroke-width="1"/></svg><svg style="left:590px;top:587px" width="20" height="20" viewBox="0 0 16 16"><path d="M4.2 0.4 V15.6 M2.8 2.6 H5.6 M2.8 13.6 H5.6 M11.2 1 V13.6 M9.8 1.8 H12.6 M9.8 12 H12.6" fill="none" stroke="#3b3b3b" stroke-width="1" stroke-dasharray="3 0.8"/><rect x="2.1" y="6.5" width="4.4" height="5" fill="#83beec" stroke="#1a73c7" stroke-width="1.1"/><rect x="9.2" y="3.5" width="4.2" height="5" fill="#83beec" stroke="#1a73c7" stroke-width="1.1"/></svg><svg style="left:590px;top:615px" width="20" height="20" viewBox="0 0 16 16"><rect x="1.9" y="4" width="2" height="11.2" fill="#fafafa" stroke="#797979" stroke-width="1"/><rect x="5.4" y="4" width="2" height="4.6" fill="#c8c6c4" stroke="#797979" stroke-width="1"/><rect x="9" y="1.4" width="1.8" height="7.2" fill="#1e8bcd" stroke="#1a73c7" stroke-width="1"/><rect x="12.4" y="1.4" width="2" height="13.8" fill="#fafafa" stroke="#797979" stroke-width="1"/><path d="M0.6 0.2 V15.3 H15.7 M4 4 H5.4 M7.4 8.6 H9 M10.8 1.4 H12.4" fill="none" stroke="#3b3b3b" stroke-width="1"/></svg><svg style="left:590px;top:643px" width="20" height="20" viewBox="0 0 16 16"><rect x="0.8" y="1.2" width="14.6" height="3.4" fill="#83beec" stroke="#1a73c7" stroke-width="1.1"/><rect x="2.6" y="4.6" width="11" height="3.6" fill="#83beec" stroke="#1a73c7" stroke-width="1.1"/><rect x="5.6" y="8.2" width="5" height="3.6" fill="#83beec" stroke="#1a73c7" stroke-width="1.1"/></svg><svg style="left:590px;top:671px" width="20" height="20" viewBox="0 0 16 16"><rect x="2.6" y="6.4" width="3.4" height="8.8" fill="#83beec" stroke="#1a73c7" stroke-width="1"/><rect x="6.6" y="1.5" width="3.6" height="13.7" fill="#fafafa" stroke="#797979" stroke-width="1"/><rect x="10.6" y="4.7" width="3.6" height="10.5" fill="#c8c6c4" stroke="#797979" stroke-width="1"/><path d="M0.8 14.2 L5.2 8.4 L10 12 L15.4 7.4" fill="none" stroke="#3b3b3b" stroke-width="1"/><path d="M0.6 0.2 V15.3 H15.7" fill="none" stroke="#3b3b3b" stroke-width="1"/></svg>
<svg style="left:0;top:0" width="1920" height="952" viewBox="0 0 1920 952"><rect x="792.9" y="179.2" width="6.5" height="38.7" fill="#83beec" stroke="#1a73c7" stroke-width="1.4"/><rect x="799.6" y="193.3" width="5.4" height="24.6" fill="#fff" stroke="#3b3b3b" stroke-width="1.3"/><rect x="810.6" y="199.0" width="5.7" height="18.9" fill="#c8c6c4" stroke="#8a8886" stroke-width="1.3"/><rect x="816.5" y="188.3" width="6.5" height="29.6" fill="#fff" stroke="#3b3b3b" stroke-width="1.3"/><path d="M786.8 177.2 V218.4 H827.9" fill="none" stroke="#3b3b3b" stroke-width="1.3"/><rect x="862.6" y="205.0" width="10.7" height="12.9" fill="#fafafa" stroke="#3b3b3b" stroke-width="1.3"/><rect x="862.6" y="191.3" width="10.7" height="13.3" fill="#83beec" stroke="#1a73c7" stroke-width="1.5"/><rect x="881.0" y="200.2" width="10.2" height="17.7" fill="#fafafa" stroke="#3b3b3b" stroke-width="1.3"/><rect x="881.0" y="182.0" width="10.2" height="17.8" fill="#c8c6c4" stroke="#8a8886" stroke-width="1.5"/><path d="M856.7 177.2 V218.4 H897.8" fill="none" stroke="#3b3b3b" stroke-width="1.3"/><rect x="932.9" y="209.6" width="10.4" height="8.3" fill="#fafafa" stroke="#3b3b3b" stroke-width="1.3"/><rect x="932.9" y="182.0" width="10.4" height="27.2" fill="#83beec" stroke="#1a73c7" stroke-width="1.5"/><rect x="950.9" y="196.4" width="10.4" height="21.5" fill="#fafafa" stroke="#3b3b3b" stroke-width="1.3"/><rect x="950.9" y="182.0" width="10.4" height="14.0" fill="#c8c6c4" stroke="#8a8886" stroke-width="1.5"/><path d="M926.8 177.2 V218.4 H967.8" fill="none" stroke="#3b3b3b" stroke-width="1.3"/><path d="M999.3 175.9 V209.1 H1039 M999.3 209.1 L995.1 215.6" fill="none" stroke="#3b3b3b" stroke-width="1.1"/><path d="M1002.6 196.4 L1005.2 193.8 H1012.0 V216.5 L1009.4 219.1 V196.4 Z" fill="#fff" stroke="#3b3b3b" stroke-width="1.1" stroke-linejoin="round"/><path d="M1009.4 196.4 L1012.0 193.8" fill="none" stroke="#3b3b3b" stroke-width="1.1"/><rect x="1002.6" y="196.4" width="6.8" height="22.7" fill="#fff" stroke="#3b3b3b" stroke-width="1.1"/><path d="M1009.6 186.6 L1012.2 184.0 H1019.0 V216.5 L1016.4 219.1 V186.6 Z" fill="#83beec" stroke="#1a73c7" stroke-width="1.1" stroke-linejoin="round"/><path d="M1016.4 186.6 L1019.0 184.0" fill="none" stroke="#1a73c7" stroke-width="1.1"/><rect x="1009.6" y="186.6" width="6.8" height="32.5" fill="#83beec" stroke="#1a73c7" stroke-width="1.1"/><path d="M1028.8 195.2 L1031.4 192.6 H1038.0 V216.5 L1035.4 219.1 V195.2 Z" fill="#c8c6c4" stroke="#8a8886" stroke-width="1.1" stroke-linejoin="round"/><path d="M1035.4 195.2 L1038.0 192.6" fill="none" stroke="#8a8886" stroke-width="1.1"/><rect x="1028.8" y="195.2" width="6.6" height="23.9" fill="#c8c6c4" stroke="#8a8886" stroke-width="1.1"/><path d="M1021.4 190.4 L1024.0 187.8 H1031.0 V216.5 L1028.4 219.1 V190.4 Z" fill="#fff" stroke="#3b3b3b" stroke-width="1.1" stroke-linejoin="round"/><path d="M1028.4 190.4 L1031.0 187.8" fill="none" stroke="#3b3b3b" stroke-width="1.1"/><rect x="1021.4" y="190.4" width="7.0" height="28.7" fill="#fff" stroke="#3b3b3b" stroke-width="1.1"/><path d="M1071.4 175.9 V207.3 H1108.7 M1071.4 207.3 L1065.3 213.6" fill="none" stroke="#3b3b3b" stroke-width="1.1"/><path d="M1076.6 208.4 L1079.6 205.4 H1088.6 V216.1 L1085.6 219.1 V208.4 Z" fill="#fafafa" stroke="#3b3b3b" stroke-width="1.1" stroke-linejoin="round"/><path d="M1085.6 208.4 L1088.6 205.4" fill="none" stroke="#3b3b3b" stroke-width="1.1"/><rect x="1076.6" y="208.4" width="9.0" height="10.7" fill="#fafafa" stroke="#3b3b3b" stroke-width="1.1"/><path d="M1076.6 193.6 L1079.6 190.6 H1088.6 V205.2 L1085.6 208.2 V193.6 Z" fill="#83beec" stroke="#1a73c7" stroke-width="1.1" stroke-linejoin="round"/><path d="M1085.6 193.6 L1088.6 190.6" fill="none" stroke="#1a73c7" stroke-width="1.1"/><rect x="1076.6" y="193.6" width="9.0" height="14.6" fill="#83beec" stroke="#1a73c7" stroke-width="1.1"/><path d="M1092.7 200.6 L1095.7 197.6 H1104.6 V216.1 L1101.6 219.1 V200.6 Z" fill="#fafafa" stroke="#3b3b3b" stroke-width="1.1" stroke-linejoin="round"/><path d="M1101.6 200.6 L1104.6 197.6" fill="none" stroke="#3b3b3b" stroke-width="1.1"/><rect x="1092.7" y="200.6" width="8.9" height="18.5" fill="#fafafa" stroke="#3b3b3b" stroke-width="1.1"/><path d="M1092.7 184.4 L1095.7 181.4 H1104.6 V197.4 L1101.6 200.4 V184.4 Z" fill="#83beec" stroke="#1a73c7" stroke-width="1.1" stroke-linejoin="round"/><path d="M1101.6 184.4 L1104.6 181.4" fill="none" stroke="#1a73c7" stroke-width="1.1"/><rect x="1092.7" y="184.4" width="8.9" height="16.0" fill="#83beec" stroke="#1a73c7" stroke-width="1.1"/><path d="M1141.6 175.9 V207.3 H1178.6 M1141.6 207.3 L1135.3 213.6" fill="none" stroke="#3b3b3b" stroke-width="1.1"/><path d="M1146.4 208.4 L1149.4 205.4 H1158.9 V216.1 L1155.9 219.1 V208.4 Z" fill="#fafafa" stroke="#3b3b3b" stroke-width="1.1" stroke-linejoin="round"/><path d="M1155.9 208.4 L1158.9 205.4" fill="none" stroke="#3b3b3b" stroke-width="1.1"/><rect x="1146.4" y="208.4" width="9.5" height="10.7" fill="#fafafa" stroke="#3b3b3b" stroke-width="1.1"/><path d="M1146.4 184.4 L1149.4 181.4 H1158.9 V205.2 L1155.9 208.2 V184.4 Z" fill="#83beec" stroke="#1a73c7" stroke-width="1.1" stroke-linejoin="round"/><path d="M1155.9 184.4 L1158.9 181.4" fill="none" stroke="#1a73c7" stroke-width="1.1"/><rect x="1146.4" y="184.4" width="9.5" height="23.8" fill="#83beec" stroke="#1a73c7" stroke-width="1.1"/><path d="M1162.5 193.6 L1165.5 190.6 H1174.7 V216.1 L1171.7 219.1 V193.6 Z" fill="#fafafa" stroke="#3b3b3b" stroke-width="1.1" stroke-linejoin="round"/><path d="M1171.7 193.6 L1174.7 190.6" fill="none" stroke="#3b3b3b" stroke-width="1.1"/><rect x="1162.5" y="193.6" width="9.2" height="25.5" fill="#fafafa" stroke="#3b3b3b" stroke-width="1.1"/><path d="M1162.5 184.4 L1165.5 181.4 H1174.7 V190.4 L1171.7 193.4 V184.4 Z" fill="#83beec" stroke="#1a73c7" stroke-width="1.1" stroke-linejoin="round"/><path d="M1171.7 184.4 L1174.7 181.4" fill="none" stroke="#1a73c7" stroke-width="1.1"/><rect x="1162.5" y="184.4" width="9.2" height="9.0" fill="#83beec" stroke="#1a73c7" stroke-width="1.1"/><path d="M1209.6 175.9 V211.4 H1249 M1209.6 211.4 L1205.1 217.4" fill="none" stroke="#3b3b3b" stroke-width="1.1"/><path d="M1217.6 185.6 L1220.0 183.2 H1224.8 V213.4 L1222.4 215.8 V185.6 Z" fill="#83beec" stroke="#1a73c7" stroke-width="1.1" stroke-linejoin="round"/><path d="M1222.4 185.6 L1224.8 183.2" fill="none" stroke="#1a73c7" stroke-width="1.1"/><rect x="1217.6" y="185.6" width="4.8" height="30.2" fill="#83beec" stroke="#1a73c7" stroke-width="1.1"/><path d="M1235.4 184.4 L1237.8 182.0 H1242.6 V212.6 L1240.2 215.0 V184.4 Z" fill="#83beec" stroke="#1a73c7" stroke-width="1.1" stroke-linejoin="round"/><path d="M1240.2 184.4 L1242.6 182.0" fill="none" stroke="#1a73c7" stroke-width="1.1"/><rect x="1235.4" y="184.4" width="4.8" height="30.6" fill="#83beec" stroke="#1a73c7" stroke-width="1.1"/><path d="M1211.8 198.6 L1214.0 196.4 H1219.8 V216.9 L1217.6 219.1 V198.6 Z" fill="#fff" stroke="#3b3b3b" stroke-width="1.1" stroke-linejoin="round"/><path d="M1217.6 198.6 L1219.8 196.4" fill="none" stroke="#3b3b3b" stroke-width="1.1"/><rect x="1211.8" y="198.6" width="5.8" height="20.5" fill="#fff" stroke="#3b3b3b" stroke-width="1.1"/><path d="M1229.6 192.2 L1231.8 190.0 H1237.8 V216.9 L1235.6 219.1 V192.2 Z" fill="#fff" stroke="#3b3b3b" stroke-width="1.1" stroke-linejoin="round"/><path d="M1235.6 192.2 L1237.8 190.0" fill="none" stroke="#3b3b3b" stroke-width="1.1"/><rect x="1229.6" y="192.2" width="6.0" height="26.9" fill="#fff" stroke="#3b3b3b" stroke-width="1.1"/></svg>
<svg style="left:0;top:0" width="1920" height="952" viewBox="0 0 1920 952"><path d="M789 310.5 H1041.2" stroke="#d9d9d9" stroke-width="1" fill="none"/><path d="M789 328.5 H1041.2" stroke="#d9d9d9" stroke-width="1" fill="none"/><path d="M789 345.5 H1041.2" stroke="#d9d9d9" stroke-width="1" fill="none"/><path d="M789 363.5 H1041.2" stroke="#d9d9d9" stroke-width="1" fill="none"/><path d="M789 381.5 H1041.2" stroke="#d9d9d9" stroke-width="1" fill="none"/><path d="M789 399.5 H1041.2" stroke="#d9d9d9" stroke-width="1" fill="none"/><path d="M789 416.5 H1041.2" stroke="#d9d9d9" stroke-width="1" fill="none"/><rect x="801.0" y="340.5" width="11.2" height="76.0" fill="#4472c4"/><rect x="815.0" y="374.1" width="11.2" height="42.4" fill="#ed7d31"/><rect x="829.0" y="381.1" width="11.2" height="35.4" fill="#a5a5a5"/><rect x="864.1" y="372.3" width="11.2" height="44.2" fill="#4472c4"/><rect x="878.1" y="338.7" width="11.2" height="77.8" fill="#ed7d31"/><rect x="892.1" y="381.1" width="11.2" height="35.4" fill="#a5a5a5"/><rect x="927.0" y="354.6" width="11.2" height="61.9" fill="#4472c4"/><rect x="941.0" y="384.7" width="11.2" height="31.8" fill="#ed7d31"/><rect x="955.0" y="363.4" width="11.2" height="53.1" fill="#a5a5a5"/><rect x="990.1" y="336.9" width="11.2" height="79.6" fill="#4472c4"/><rect x="1004.1" y="367.0" width="11.2" height="49.5" fill="#ed7d31"/><rect x="1018.1" y="328.1" width="11.2" height="88.4" fill="#a5a5a5"/><rect x="880.6" y="434.6" width="3" height="3" fill="#4472c4"/><rect x="904.3" y="434.6" width="3" height="3" fill="#ed7d31"/><rect x="928.1" y="434.6" width="3" height="3" fill="#a5a5a5"/></svg>
<span class="t" style="left:883px;top:293px;font-size:8.6px;line-height:10px;color:#595959;letter-spacing:-0.17px;">Titolo del grafico</span>
<span class="t" style="left:781px;top:307px;font-size:5.6px;line-height:6px;color:#595959;">6</span>
<span class="t" style="left:781px;top:325px;font-size:5.6px;line-height:6px;color:#595959;">5</span>
<span class="t" style="left:781px;top:342px;font-size:5.6px;line-height:6px;color:#595959;">4</span>
<span class="t" style="left:780px;top:360px;font-size:5.6px;line-height:6px;color:#595959;">3</span>
<span class="t" style="left:781px;top:378px;font-size:5.6px;line-height:6px;color:#595959;">2</span>
<span class="t" style="left:780px;top:396px;font-size:5.6px;line-height:6px;color:#595959;">1</span>
<span class="t" style="left:781px;top:413px;font-size:5.6px;line-height:6px;color:#595959;">0</span>
<span class="t" style="left:807px;top:420px;font-size:5.6px;line-height:6px;color:#595959;letter-spacing:-0.2px;">Categoria 1</span>
<span class="t" style="left:870px;top:420px;font-size:5.6px;line-height:6px;color:#595959;letter-spacing:-0.2px;">Categoria 2</span>
<span class="t" style="left:933px;top:420px;font-size:5.6px;line-height:6px;color:#595959;letter-spacing:-0.3px;">Categoria 3</span>
<span class="t" style="left:996px;top:420px;font-size:5.6px;line-height:6px;color:#595959;letter-spacing:-0.2px;">Categoria 4</span>
<span class="t" style="left:884px;top:433px;font-size:5.6px;line-height:6px;color:#595959;letter-spacing:-0.12px;">Serie1</span>
<span class="t" style="left:908px;top:433px;font-size:5.6px;line-height:6px;color:#595959;letter-spacing:-0.12px;">Serie2</span>
<span class="t" style="left:931px;top:433px;font-size:5.6px;line-height:6px;color:#595959;letter-spacing:-0.32px;">Serie3</span>
</div>
</body></html>
